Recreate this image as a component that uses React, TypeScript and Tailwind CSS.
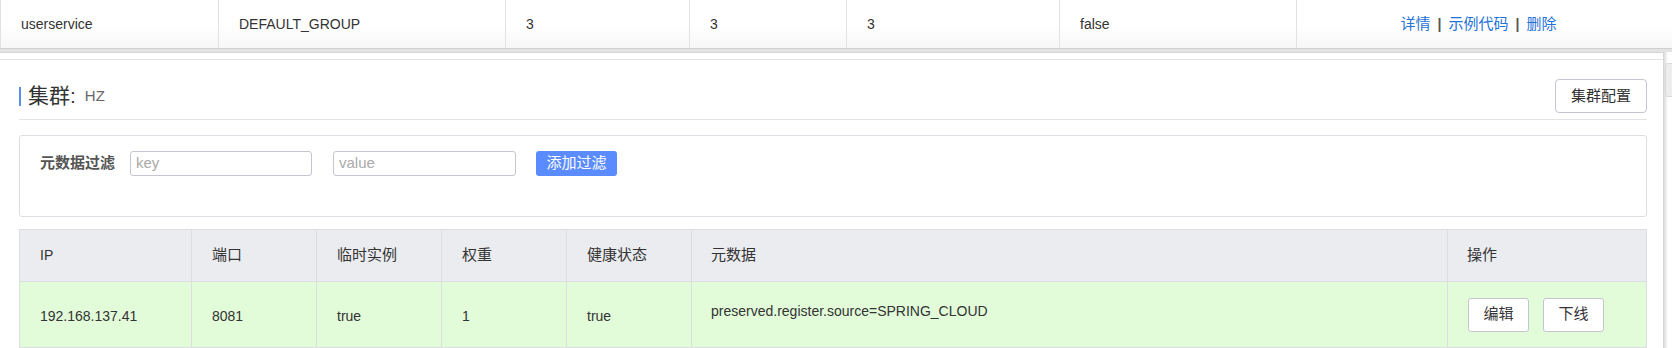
import React from "react";

const topCols: { w: string; text: string }[] = [
  { w: "w-[219px] border-l", text: "userservice" },
  { w: "w-[287px]", text: "DEFAULT_GROUP" },
  { w: "w-[184px]", text: "3" },
  { w: "w-[157px]", text: "3" },
  { w: "w-[213px]", text: "3" },
  { w: "w-[237px]", text: "false" },
];

function Sep() {
  return <span className="mx-[7px] text-[#555] font-bold text-[14px]">|</span>;
}

export default function App() {
  return (
    <div className="w-[1672px] h-[348px] overflow-hidden bg-white text-[14px] text-[#333] flex flex-col font-['Liberation_Sans','Noto_Sans_CJK_SC',sans-serif]">
      {/* top service row */}
      <div className="h-[49px] shrink-0 flex border-b border-[#d0d0d0] bg-linear-to-b from-white via-white to-[#f7f7f7]">
        {topCols.map((c, i) => (
          <div
            key={i}
            className={`${c.w} shrink-0 h-full border-r border-[#e2e2e2] flex items-center pl-[20px]`}
          >
            {c.text}
          </div>
        ))}
        <div className="flex-1 h-full flex items-center justify-center pr-[12px] text-[#1f73d8] text-[15px]">
          <span>详情</span>
          <Sep />
          <span>示例代码</span>
          <Sep />
          <span>删除</span>
        </div>
      </div>
      <div className="h-[3px] shrink-0 bg-[#e3e3e3]" />

      {/* panel */}
      <div className="flex flex-1 min-h-0">
        <div className="w-[1663px] shrink-0 border-t border-[#d6d6d6] pt-[6px]">
          <div className="border-t border-[#e3e3e3] pl-[19px] pr-[16px]">
            {/* header */}
            <div className="flex items-center justify-between pt-[19px] pb-[6px] border-b border-[#e3e3e3]">
              <div className="flex items-center">
                <div className="w-[2px] h-[19px] bg-[#5b8def]" />
                <span className="ml-[7px] text-[21px] leading-[24px] text-[#333]">集群:</span>
                <span className="ml-[9px] text-[15px] text-[#666]">HZ</span>
              </div>
              <button className="w-[92px] h-[34px] border border-[#c4c6cf] rounded-[4px] bg-white text-[15px] text-[#333]">
                集群配置
              </button>
            </div>

            {/* filter */}
            <div className="mt-[15px] border border-[#dcdee3] rounded-[3px] pt-[15px] pb-[40px] pl-[20px] flex items-center">
              <span className="text-[15px] font-semibold text-[#555] w-[90px] shrink-0">元数据过滤</span>
              <div className="w-[182px] h-[25px] border border-[#c4c6cf] rounded-[3px] flex items-center pl-[5px] text-[15px] text-[#aaa]">
                key
              </div>
              <div className="ml-[21px] w-[183px] h-[25px] border border-[#c4c6cf] rounded-[3px] flex items-center pl-[5px] text-[15px] text-[#aaa]">
                value
              </div>
              <button className="ml-[20px] w-[81px] h-[25px] rounded-[3px] bg-[#5a8bff] text-white text-[15px]">
                添加过滤
              </button>
            </div>

            {/* instances table */}
            <div className="mt-[12px] border border-[#dcdee3] h-[119px]">
              <div className="h-[52px] flex bg-[#ebecf0] border-b border-[#dcdee3] text-[15px] text-[#333]">
                <div className="w-[172px] shrink-0 border-r border-[#dcdee3] flex items-center pl-[20px] text-[14px]">IP</div>
                <div className="w-[125px] shrink-0 border-r border-[#dcdee3] flex items-center pl-[20px]">端口</div>
                <div className="w-[125px] shrink-0 border-r border-[#dcdee3] flex items-center pl-[20px]">临时实例</div>
                <div className="w-[125px] shrink-0 border-r border-[#dcdee3] flex items-center pl-[20px]">权重</div>
                <div className="w-[125px] shrink-0 border-r border-[#dcdee3] flex items-center pl-[20px]">健康状态</div>
                <div className="w-[756px] shrink-0 border-r border-[#dcdee3] flex items-center pl-[19px]">元数据</div>
                <div className="flex-1 flex items-center pl-[19px]">操作</div>
              </div>
              <div className="h-[65px] flex bg-[#e2fbd9] text-[#333]">
                <div className="w-[172px] shrink-0 border-r border-[#dcdee3] flex items-center pl-[20px] pt-[4px]">192.168.137.41</div>
                <div className="w-[125px] shrink-0 border-r border-[#dcdee3] flex items-center pl-[20px] pt-[4px]">8081</div>
                <div className="w-[125px] shrink-0 border-r border-[#dcdee3] flex items-center pl-[20px] pt-[4px]">true</div>
                <div className="w-[125px] shrink-0 border-r border-[#dcdee3] flex items-center pl-[20px] pt-[4px]">1</div>
                <div className="w-[125px] shrink-0 border-r border-[#dcdee3] flex items-center pl-[20px] pt-[4px]">true</div>
                <div className="w-[756px] shrink-0 border-r border-[#dcdee3] pl-[19px] pt-[19px]">
                  preserved.register.source=SPRING_CLOUD
                </div>
                <div className="flex-1 flex items-center pl-[20px] gap-[14px]">
                  <button className="w-[61px] h-[34px] border border-[#c4c6cf] rounded-[3px] bg-white text-[15px] text-[#333]">编辑</button>
                  <button className="w-[61px] h-[34px] border border-[#c4c6cf] rounded-[3px] bg-white text-[15px] text-[#333]">下线</button>
                </div>
              </div>
            </div>
          </div>
        </div>
        {/* right strip */}
        <div className="flex-1 relative bg-white">
          <div className="absolute left-0 top-0 bottom-0 w-[5px] bg-linear-to-r from-[#d2d2d2] to-transparent" />
          <div className="absolute top-[11px] left-[2px] w-[12px] h-[34px] rounded-[3px] bg-[#ededed] border border-[#dadada]" />
        </div>
      </div>
    </div>
  );
}
